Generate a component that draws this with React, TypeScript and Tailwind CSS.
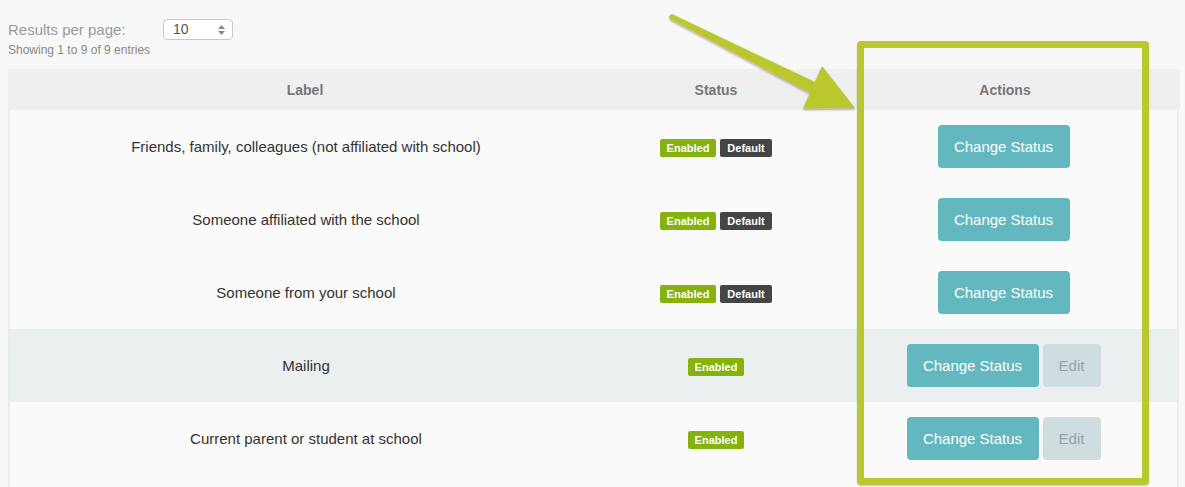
import React from "react";

const rows = [
  { label: "Friends, family, colleagues (not affiliated with school)", isDefault: true },
  { label: "Someone affiliated with the school", isDefault: true },
  { label: "Someone from your school", isDefault: true },
  { label: "Mailing", isDefault: false, active: true },
  { label: "Current parent or student at school", isDefault: false },
];

function StatusCell({ isDefault }: { isDefault: boolean }) {
  return (
    <div className="flex items-center justify-center gap-[4px]">
      <span className="w-[56px] h-[18px] rounded-[2px] bg-[#86b20e] text-white text-[11px] font-bold leading-[18px] text-center">
        Enabled
      </span>
      {isDefault && (
        <span className="w-[52px] h-[18px] rounded-[2px] bg-[#454545] text-white text-[11px] font-bold leading-[18px] text-center">
          Default
        </span>
      )}
    </div>
  );
}

function Actions({ isDefault }: { isDefault: boolean }) {
  return (
    <div className="flex items-center justify-center gap-[4px]">
      <button className="w-[132px] h-[43px] rounded-[4px] bg-[#62b8be] text-white text-[15px] pt-[2px]">
        Change Status
      </button>
      {!isDefault && (
        <button className="w-[58px] h-[43px] rounded-[4px] bg-[#cfdde1] text-[#95a4a7] text-[15px] pt-[2px]">
          Edit
        </button>
      )}
    </div>
  );
}

export default function App() {
  return (
    <div
      className="relative w-[1185px] h-[487px] overflow-hidden bg-[#f8f8f8] text-[#333]"
      style={{ fontFamily: '"Liberation Sans", Arial, sans-serif' }}
    >
      {/* Top controls */}
      <div className="pl-[8px] pt-[19px]">
        <div className="flex items-center h-[21px] pt-[2px]">
          <span className="w-[155px] text-[15px] text-[#9a9a9a]">Results per page:</span>
          <div className="relative w-[70px] h-[21px] -mt-[2px] rounded-[4px] border border-[#c8c8c8] bg-white flex items-center pl-[9px] text-[14px] text-[#555]">
            10
            <svg className="absolute right-[7px] top-[5px]" width="7" height="10" viewBox="0 0 7 10">
              <path d="M3.5 0 L7 4 L0 4 Z" fill="#888" />
              <path d="M0 6 L7 6 L3.5 10 Z" fill="#888" />
            </svg>
          </div>
        </div>
        <p className="mt-[3px] text-[12px] leading-[15px] text-[#888]">Showing 1 to 9 of 9 entries</p>
      </div>

      {/* Table */}
      <div className="mt-[11px] ml-[8px] w-[1172px]">
        <div className="grid grid-cols-[594px_228px_350px] h-[41px] pt-[2px] bg-[#efefef] items-center text-[14px] font-bold text-[#777] text-center">
          <div>Label</div>
          <div>Status</div>
          <div>Actions</div>
        </div>
        <div className="w-[1171px] border-x-2 border-[#ececec]">
          {rows.map((r) => (
            <div
              key={r.label}
              className={
                "grid grid-cols-[592px_228px_347px] h-[73px] items-center text-center text-[15px] " +
                (r.active ? "bg-[#ebeff0]" : "bg-[#fafafa]")
              }
            >
              <div className="pt-[2px]">{r.label}</div>
              <div className="pt-[2px]">
                <StatusCell isDefault={r.isDefault} />
              </div>
              <Actions isDefault={r.isDefault} />
            </div>
          ))}
          <div className="h-[73px] bg-[#fafafa]" />
        </div>
      </div>

      {/* Annotation: highlight box */}
      <div className="absolute left-[857px] top-[41px] w-[292px] h-[444px] border-[7px] border-[#bac82f] rounded-[4px] shadow-[0_1px_2px_rgba(0,0,0,0.2)] pointer-events-none" />

      {/* Annotation: arrow */}
      <svg className="absolute left-0 top-0 pointer-events-none" width="1185" height="487" viewBox="0 0 1185 487">
        <defs>
          <filter id="arrowShadow" x="-10%" y="-10%" width="120%" height="130%">
            <feDropShadow dx="0" dy="1.5" stdDeviation="1.2" floodColor="#000" floodOpacity="0.35" />
          </filter>
        </defs>
        <path
          d="M673 14.5 L815 82 L822 66 L855 108 L803 108.5 L810 93 L671 19.5 A2.5 2.5 0 0 1 673 14.5 Z"
          fill="#bac82f"
          filter="url(#arrowShadow)"
        />
      </svg>
    </div>
  );
}
